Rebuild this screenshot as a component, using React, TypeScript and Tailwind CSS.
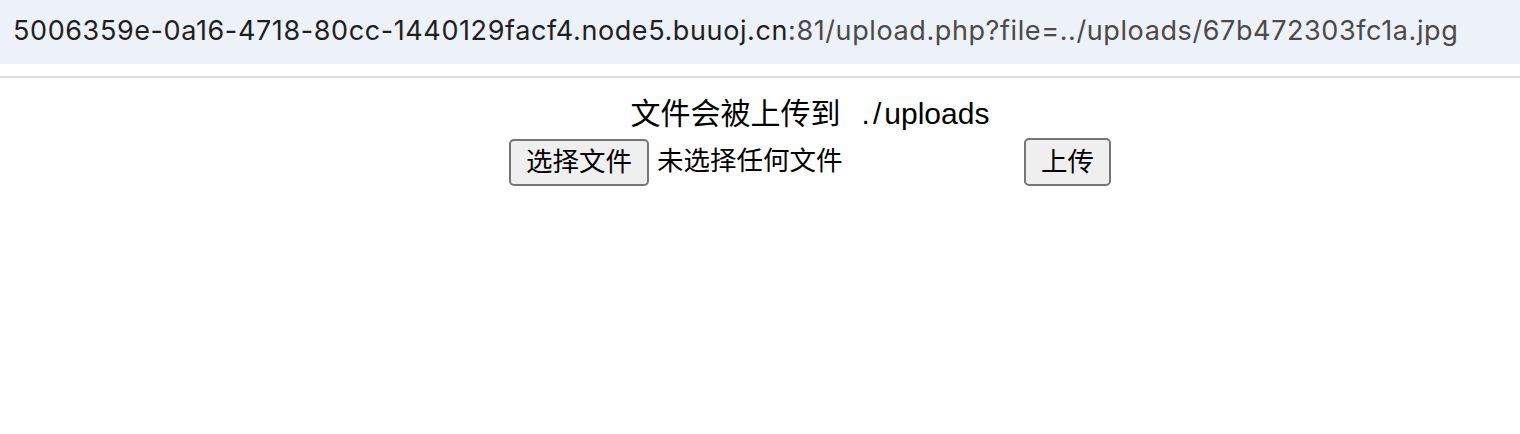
export default function App() {
  return (
    <div className="min-h-screen bg-white font-['Inter','Noto_Sans_CJK_SC',sans-serif]">
      {/* address bar */}
      <div className="h-16 bg-[#edf1f8] flex items-center pl-[13px]">
        <span className="text-[27px] tracking-[0.6px] whitespace-nowrap -mt-[2px]">
          <span className="text-[#1f1f1f]">5006359e-0a16-4718-80cc-1440129facf4.node5.buuoj.cn</span>
          <span className="text-[#4a4a4a]">:81/upload.php?file=../uploads/67b472303fc1a.jpg</span>
        </span>
      </div>
      <div className="mt-3 h-[2px] bg-[#dedede]" />

      {/* page */}
      <div className="flex flex-col items-center pl-[100px] pt-[17px] font-['Liberation_Sans','Noto_Sans_CJK_SC',sans-serif] text-black">
        <div className="flex items-baseline text-[30px] leading-[38px] whitespace-nowrap">
          <span>文件会被上传到</span>
          <span className="ml-[21px]">.</span>
          <span className="ml-[3px] mr-[3px]">/</span>
          <span>uploads</span>
        </div>
        <form className="flex items-center gap-[6px] mt-[5px]">
          <div className="w-[509px] flex items-center">
            <button
              type="button"
              className="h-[47px] px-[15px] bg-[#efefef] border-2 border-[#767676] rounded-[5px] text-[26.5px] leading-none"
            >
              选择文件
            </button>
            <span className="ml-[8px] text-[26.5px]">未选择任何文件</span>
          </div>
          <button
            type="submit"
            className="h-[48px] px-[15px] bg-[#efefef] border-2 border-[#767676] rounded-[5px] text-[26.5px] leading-none"
          >
            上传
          </button>
        </form>
      </div>
    </div>
  );
}
